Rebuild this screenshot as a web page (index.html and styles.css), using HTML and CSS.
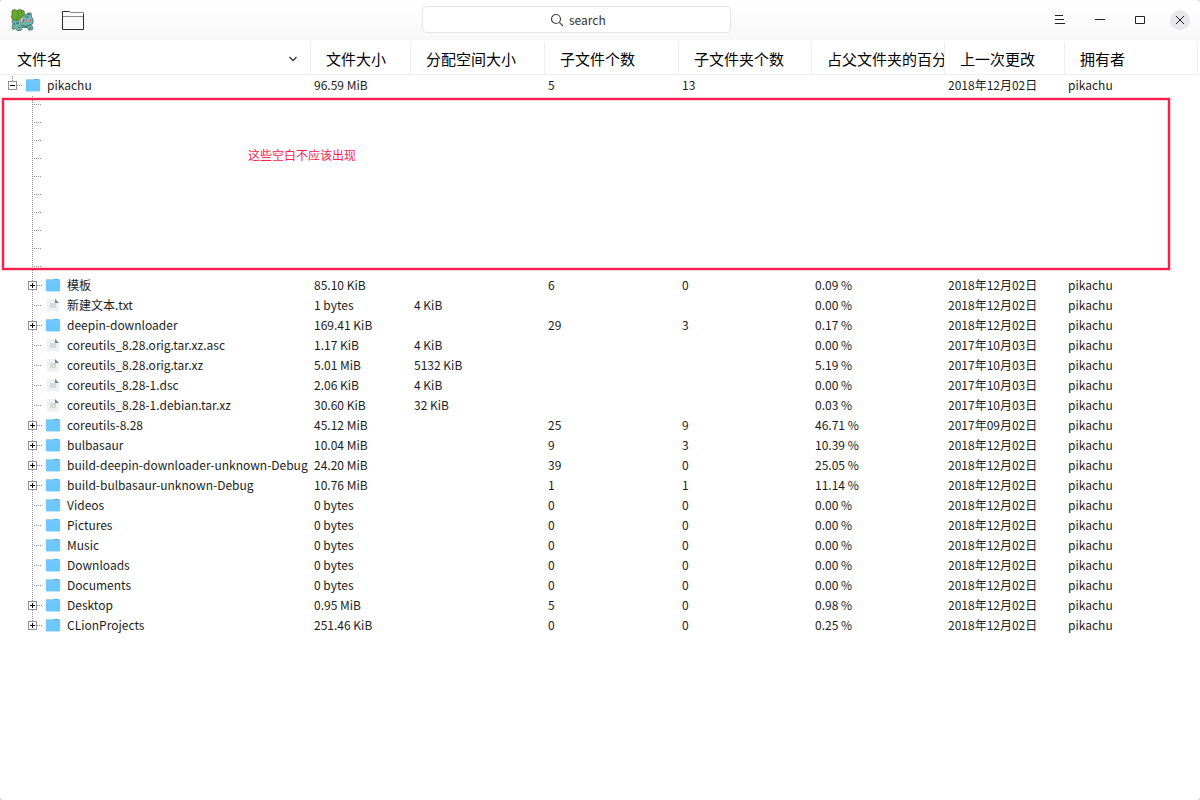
FILE: index.html
```
<!DOCTYPE html>
<html lang="zh-CN">
<head>
<meta charset="utf-8">
<title>bulbasaur</title>
<link rel="stylesheet" href="styles.css">
</head>
<body>
<svg class="defs" aria-hidden="true">
  <linearGradient id="sky" x1="0" y1="0" x2="0" y2="1"><stop offset="0" stop-color="#74c6fb"/><stop offset="1" stop-color="#66c8ff"/></linearGradient>
  <symbol id="folder" viewBox="0 0 16 16">
    <rect x="0.500" y="2.500" width="15" height="12.500" rx="1" fill="#e3eaee"/>
    <path d="M1 4V2.500H8.500L9.500 2H13.500L14.500 2.500V4Z" fill="#57aee6"/>
    <rect x="1" y="3" width="14" height="11.300" rx="1" fill="url(#sky)"/>
  </symbol>
  <symbol id="file" viewBox="0 0 16 16">
    <path d="M2 2H10L14 6V14.500H2Z" fill="#edf1f2"/>
    <rect x="5" y="6" width="6" height="5" fill="#d5d9da"/>
    <path d="M10 2L14 6H10Z" fill="#6f7f8c"/>
  </symbol>
  <symbol id="g-root" viewBox="0 0 20 20">
    <path class="dots" d="M10.500 1V6M15 10.500H20"/>
    <rect class="box" x="6.500" y="6.500" width="8" height="8"/>
    <path class="sign" d="M8 10.500H13"/>
  </symbol>
  <symbol id="g-plus" viewBox="0 0 20 20">
    <path class="dots" d="M10.500 1V6M10.500 15V20M15 10.500H20"/>
    <rect class="box" x="6.500" y="6.500" width="8" height="8"/>
    <path class="sign" d="M8 10.500H13M10.500 8V13"/>
  </symbol>
  <symbol id="g-end" viewBox="0 0 20 20">
    <path class="dots" d="M10.500 1V6M15 10.500H20"/>
    <rect class="box" x="6.500" y="6.500" width="8" height="8"/>
    <path class="sign" d="M8 10.500H13M10.500 8V13"/>
  </symbol>
  <symbol id="g-leaf" viewBox="0 0 20 20">
    <path class="dots" d="M10.500 1V20M12 10.500H19"/>
  </symbol>
  <symbol id="g-gap" viewBox="0 0 20 18">
    <path class="dots" d="M10.500 1V18M12 9.500H19"/>
  </symbol>
</svg>
<div class="window">
  <header class="titlebar">
    <div class="left">
      <svg class="logo" viewBox="0 0 24 24" role="img" aria-label="bulbasaur">
        <path d="M3 11L7 9L11 7L14 6.500L16 7L18 5L21 5L21.500 9L23 11V15L21.500 17L23 20L22 22H18.500L17.500 19.500H12L11 22.500H7L5.500 20.500L3 21.500L2 19L3 16L2 13Z" fill="#6fb3a8" stroke="#47706f" stroke-width="0.800"/>
        <path d="M2 3L4 1.500L7 2.500L10 1.500L14 3L14.500 6L12 8.500L10 11L7 12.500L4 12L1.500 10L2 7Z" fill="#69ab2f" stroke="#42702a" stroke-width="0.800"/>
        <path d="M7 3L8.500 7L6.500 11.500M11 3L11.500 6" fill="none" stroke="#4b8525"/>
        <path d="M15 8L17 9.500M17.500 6.500L20 6.500M4 15L5 17M8 19L10 20M19 20H21M11 17.500L16 18.500L21 16.500" fill="none" stroke="#39706d"/>
        <path d="M11 10.500L14.500 11V14L11.500 13ZM19.500 10.500L22 11.500V13.500L20 13Z" fill="#fff"/>
        <path d="M12.500 11H14.500V14H12.500ZM20 11H21.500V13.500H20Z" fill="#c93c57"/>
        <path d="M6 14H9V16H6ZM17 9H19V10H17Z" fill="#478681"/>
      </svg>
      <button class="open" type="button" aria-label="打开文件夹">
        <svg width="24" height="22" viewBox="0 0 24 22"><path d="M1.500 7.500H22.500M8.500 2.500L9.500 3.500H22.500V7.500" fill="none" stroke="#8a8a8a"/><path d="M8.500 2.500H1.500V20.500H22.500V5" fill="none" stroke="#2c2c2c"/></svg>
      </button>
    </div>
    <label class="search">
      <svg width="14" height="14" viewBox="0 0 14 14"><g fill="none" stroke="#444" stroke-width="1.200"><circle cx="6" cy="6" r="4.500"/><path d="M9.300 9.300L13 13"/></g></svg>
      <input type="text" placeholder="search" aria-label="search">
    </label>
    <div class="controls">
      <button type="button" aria-label="菜单"><svg viewBox="0 0 20 20"><path d="M5 5.500H13M5 9.500H14M5 13.500H15"/></svg></button>
      <button type="button" aria-label="最小化"><svg viewBox="0 0 20 20"><path d="M5 9.500H15"/></svg></button>
      <button type="button" aria-label="最大化"><svg viewBox="0 0 20 20"><path d="M5.500 6.500H14.500V13.500H5.500Z"/></svg></button>
      <button class="close" type="button" aria-label="关闭"><svg viewBox="0 0 20 20"><path d="M6 6L14 14M14 6L6 14"/></svg></button>
    </div>
  </header>
  <main class="tree">
    <table>
      <colgroup><col class="c-name"><col class="c-size"><col class="c-alloc"><col class="c-files"><col class="c-dirs"><col class="c-pct"><col class="c-date"><col></colgroup>
      <thead><tr>
        <th scope="col"><div class="sort">文件名<svg width="10" height="8" viewBox="0 0 10 8"><path d="M1.500 2L5 5.500L8.500 2" fill="none" stroke="#333" stroke-width="1.300"/></svg></div></th>
        <th scope="col">文件大小</th><th scope="col">分配空间大小</th><th scope="col">子文件个数</th><th scope="col">子文件夹个数</th><th scope="col">占父文件夹的百分</th><th scope="col">上一次更改</th><th scope="col">拥有者</th>
      </tr></thead>
      <tbody>
        <tr><td><div class="name root"><svg class="guide"><use href="#g-root"/></svg><svg class="icon"><use href="#folder"/></svg>pikachu</div></td><td>96.59 MiB</td><td></td><td>5</td><td>13</td><td></td><td>2018年12月02日</td><td>pikachu</td></tr>
        <tr class="gap"><td colspan="8"><div class="name"><svg class="guide"><use href="#g-gap"/></svg></div></td></tr>
        <tr class="gap"><td colspan="8"><div class="name"><svg class="guide"><use href="#g-gap"/></svg></div></td></tr>
        <tr class="gap"><td colspan="8"><div class="name"><svg class="guide"><use href="#g-gap"/></svg></div></td></tr>
        <tr class="gap"><td colspan="8"><div class="name"><svg class="guide"><use href="#g-gap"/></svg></div></td></tr>
        <tr class="gap"><td colspan="8"><div class="name"><svg class="guide"><use href="#g-gap"/></svg></div></td></tr>
        <tr class="gap"><td colspan="8"><div class="name"><svg class="guide"><use href="#g-gap"/></svg></div></td></tr>
        <tr class="gap"><td colspan="8"><div class="name"><svg class="guide"><use href="#g-gap"/></svg></div></td></tr>
        <tr class="gap"><td colspan="8"><div class="name"><svg class="guide"><use href="#g-gap"/></svg></div></td></tr>
        <tr class="gap"><td colspan="8"><div class="name"><svg class="guide"><use href="#g-gap"/></svg></div></td></tr>
        <tr class="gap"><td colspan="8"><div class="name"><svg class="guide"><use href="#g-gap"/></svg></div></td></tr>
        <tr><td><div class="name"><svg class="guide"><use href="#g-plus"/></svg><svg class="icon"><use href="#folder"/></svg>模板</div></td><td>85.10 KiB</td><td></td><td>6</td><td>0</td><td>0.09 %</td><td>2018年12月02日</td><td>pikachu</td></tr>
        <tr><td><div class="name"><svg class="guide"><use href="#g-leaf"/></svg><svg class="icon"><use href="#file"/></svg>新建文本.txt</div></td><td>1 bytes</td><td>4 KiB</td><td></td><td></td><td>0.00 %</td><td>2018年12月02日</td><td>pikachu</td></tr>
        <tr><td><div class="name"><svg class="guide"><use href="#g-plus"/></svg><svg class="icon"><use href="#folder"/></svg>deepin-downloader</div></td><td>169.41 KiB</td><td></td><td>29</td><td>3</td><td>0.17 %</td><td>2018年12月02日</td><td>pikachu</td></tr>
        <tr><td><div class="name"><svg class="guide"><use href="#g-leaf"/></svg><svg class="icon"><use href="#file"/></svg>coreutils_8.28.orig.tar.xz.asc</div></td><td>1.17 KiB</td><td>4 KiB</td><td></td><td></td><td>0.00 %</td><td>2017年10月03日</td><td>pikachu</td></tr>
        <tr><td><div class="name"><svg class="guide"><use href="#g-leaf"/></svg><svg class="icon"><use href="#file"/></svg>coreutils_8.28.orig.tar.xz</div></td><td>5.01 MiB</td><td>5132 KiB</td><td></td><td></td><td>5.19 %</td><td>2017年10月03日</td><td>pikachu</td></tr>
        <tr><td><div class="name"><svg class="guide"><use href="#g-leaf"/></svg><svg class="icon"><use href="#file"/></svg>coreutils_8.28-1.dsc</div></td><td>2.06 KiB</td><td>4 KiB</td><td></td><td></td><td>0.00 %</td><td>2017年10月03日</td><td>pikachu</td></tr>
        <tr><td><div class="name"><svg class="guide"><use href="#g-leaf"/></svg><svg class="icon"><use href="#file"/></svg>coreutils_8.28-1.debian.tar.xz</div></td><td>30.60 KiB</td><td>32 KiB</td><td></td><td></td><td>0.03 %</td><td>2017年10月03日</td><td>pikachu</td></tr>
        <tr><td><div class="name"><svg class="guide"><use href="#g-plus"/></svg><svg class="icon"><use href="#folder"/></svg>coreutils-8.28</div></td><td>45.12 MiB</td><td></td><td>25</td><td>9</td><td>46.71 %</td><td>2017年09月02日</td><td>pikachu</td></tr>
        <tr><td><div class="name"><svg class="guide"><use href="#g-plus"/></svg><svg class="icon"><use href="#folder"/></svg>bulbasaur</div></td><td>10.04 MiB</td><td></td><td>9</td><td>3</td><td>10.39 %</td><td>2018年12月02日</td><td>pikachu</td></tr>
        <tr><td><div class="name"><svg class="guide"><use href="#g-plus"/></svg><svg class="icon"><use href="#folder"/></svg>build-deepin-downloader-unknown-Debug</div></td><td>24.20 MiB</td><td></td><td>39</td><td>0</td><td>25.05 %</td><td>2018年12月02日</td><td>pikachu</td></tr>
        <tr><td><div class="name"><svg class="guide"><use href="#g-plus"/></svg><svg class="icon"><use href="#folder"/></svg>build-bulbasaur-unknown-Debug</div></td><td>10.76 MiB</td><td></td><td>1</td><td>1</td><td>11.14 %</td><td>2018年12月02日</td><td>pikachu</td></tr>
        <tr><td><div class="name"><svg class="guide"><use href="#g-leaf"/></svg><svg class="icon"><use href="#folder"/></svg>Videos</div></td><td>0 bytes</td><td></td><td>0</td><td>0</td><td>0.00 %</td><td>2018年12月02日</td><td>pikachu</td></tr>
        <tr><td><div class="name"><svg class="guide"><use href="#g-leaf"/></svg><svg class="icon"><use href="#folder"/></svg>Pictures</div></td><td>0 bytes</td><td></td><td>0</td><td>0</td><td>0.00 %</td><td>2018年12月02日</td><td>pikachu</td></tr>
        <tr><td><div class="name"><svg class="guide"><use href="#g-leaf"/></svg><svg class="icon"><use href="#folder"/></svg>Music</div></td><td>0 bytes</td><td></td><td>0</td><td>0</td><td>0.00 %</td><td>2018年12月02日</td><td>pikachu</td></tr>
        <tr><td><div class="name"><svg class="guide"><use href="#g-leaf"/></svg><svg class="icon"><use href="#folder"/></svg>Downloads</div></td><td>0 bytes</td><td></td><td>0</td><td>0</td><td>0.00 %</td><td>2018年12月02日</td><td>pikachu</td></tr>
        <tr><td><div class="name"><svg class="guide"><use href="#g-leaf"/></svg><svg class="icon"><use href="#folder"/></svg>Documents</div></td><td>0 bytes</td><td></td><td>0</td><td>0</td><td>0.00 %</td><td>2018年12月02日</td><td>pikachu</td></tr>
        <tr><td><div class="name"><svg class="guide"><use href="#g-plus"/></svg><svg class="icon"><use href="#folder"/></svg>Desktop</div></td><td>0.95 MiB</td><td></td><td>5</td><td>0</td><td>0.98 %</td><td>2018年12月02日</td><td>pikachu</td></tr>
        <tr><td><div class="name"><svg class="guide"><use href="#g-end"/></svg><svg class="icon"><use href="#folder"/></svg>CLionProjects</div></td><td>251.46 KiB</td><td></td><td>0</td><td>0</td><td>0.25 %</td><td>2018年12月02日</td><td>pikachu</td></tr>
      </tbody>
    </table>
    <div class="note">这些空白不应该出现</div>
  </main>
</div>
</body>
</html>
```
FILE: styles.css
```
* { box-sizing: border-box; }
body {
  margin: 0;
  background: #d8d8d8;
  color: #1c1c1c;
  font: 12px/20px "Noto Sans CJK SC", sans-serif;
}
.defs { position: absolute; width: 0; height: 0; }
.window {
  display: flex;
  flex-direction: column;
  min-height: 100vh;
  overflow: hidden;
  background: #fff;
  border-radius: 4px;
}
.titlebar {
  display: grid;
  grid-template-columns: 412fr 309px 459fr;
  align-items: center;
  height: 40px;
  padding: 0 10px;
  background: linear-gradient(#fff, #f8f8f8);
}
button { padding: 0; border: 0; background: none; }
button svg { display: block; }
.left { display: flex; align-items: center; gap: 27px; }
.logo { width: 24px; height: 24px; }
.search {
  display: flex;
  align-items: center;
  gap: 5px;
  height: 27px;
  margin-bottom: 1px;
  padding-left: 127px;
  background: #fff;
  border: 1px solid #e6e6e6;
  border-radius: 4px;
}
.search svg { flex: none; }
.search input {
  min-width: 0;
  flex: 1;
  padding: 0;
  border: 0;
  outline: 0;
  background: none;
  color: #303030;
  font: inherit;
}
.search input::placeholder { color: #303030; opacity: 1; }
.controls { display: flex; justify-content: flex-end; gap: 20px; }
.controls button { width: 20px; height: 20px; border-radius: 50%; }
.controls path { fill: none; stroke: #222; }
.controls .close { background: #e7e7e9; }
.tree { position: relative; padding: 2px 2px 0; }
table { width: 100%; table-layout: fixed; border-collapse: separate; border-spacing: 0; }
.c-name { width: 309px; }
.c-size { width: 100px; }
.c-alloc, .c-files { width: 134px; }
.c-dirs, .c-pct { width: 133px; }
.c-date { width: 120px; }
th {
  height: 33px;
  padding: 2px 0 0 15px;
  overflow: hidden;
  border-right: 1px solid #eee;
  border-bottom: 1px solid #eee;
  color: #000;
  font-size: 15px;
  font-weight: 400;
  text-align: left;
  white-space: nowrap;
}
.sort { display: flex; align-items: center; justify-content: space-between; padding-right: 12px; }
td { height: 20px; padding: 0 0 0 3px; white-space: nowrap; }
td:first-child { padding: 0; }
.gap td { height: 18px; }
.name { display: flex; align-items: center; height: 20px; padding-left: 20px; }
.root { padding-left: 0; }
.gap .name { height: 18px; }
.guide { flex: none; width: 20px; height: 20px; shape-rendering: crispEdges; }
.gap .guide { height: 18px; }
.dots { fill: none; stroke: #909090; stroke-dasharray: 1 1; }
.box { fill: #fff; stroke: #909090; }
.sign { stroke: #000; }
.icon { flex: none; width: 16px; height: 16px; margin: 0 6px 0 3px; }
.note {
  position: absolute;
  top: 58px;
  left: 2px;
  right: 30px;
  height: 172px;
  padding: 45px 0 0 244px;
  border: 2px solid #ff1d4d;
  box-shadow: 0 0 0 1px #ff1d4d33, inset 0 0 0 1px #ff1d4d33;
  color: #ff1d4d;
}
```
